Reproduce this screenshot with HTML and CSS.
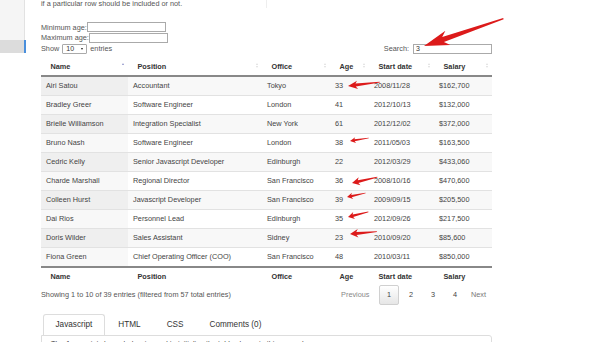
FILE: index.html
```html
<!DOCTYPE html>
<html>
<head>
  <meta charset="UTF-8">
  <title>Range filtering</title>
  <meta name="viewport" content="width=device-width, initial-scale=1">
  <link rel="stylesheet" href="styles.css">
</head>
<body>
  <div class="page">
    <!-- left menu -->
    <aside class="sidebar">
      <div class="side-top"></div>
      <div class="side-active"></div>
    </aside>

    <main class="content">
      <p class="intro">if a particular row should be included or not.</p>

      <!-- age range filters -->
      <div class="filters">
        <div class="filter-row">
          <label for="min">Minimum age:</label>
          <input type="text" id="min" class="age-input">
        </div>
        <div class="filter-row">
          <label for="max">Maximum age:</label>
          <input type="text" id="max" class="age-input">
        </div>
      </div>

      <div class="table-top">
        <div class="length">
          Show
          <span class="select-wrap">
            <select class="length-select">
              <option>10</option>
              <option>25</option>
              <option>50</option>
            </select>
          </span>
          entries
        </div>
        <div class="search">
          <label for="search">Search:</label>
          <input type="text" id="search" class="search-input" value="3">
        </div>
      </div>

      <table class="data-table">
        <colgroup>
          <col class="col-name">
          <col class="col-position">
          <col class="col-office">
          <col class="col-age">
          <col class="col-date">
          <col class="col-salary">
        </colgroup>
        <thead>
          <tr>
            <th class="sort sort-asc">Name</th>
            <th class="sort">Position</th>
            <th class="sort">Office</th>
            <th class="sort">Age</th>
            <th class="sort">Start date</th>
            <th class="sort">Salary</th>
          </tr>
        </thead>
        <tbody>
          <tr><td class="sorted">Airi Satou</td><td>Accountant</td><td>Tokyo</td><td>33</td><td>2008/11/28</td><td>$162,700</td></tr>
          <tr><td class="sorted">Bradley Greer</td><td>Software Engineer</td><td>London</td><td>41</td><td>2012/10/13</td><td>$132,000</td></tr>
          <tr><td class="sorted">Brielle Williamson</td><td>Integration Specialist</td><td>New York</td><td>61</td><td>2012/12/02</td><td>$372,000</td></tr>
          <tr><td class="sorted">Bruno Nash</td><td>Software Engineer</td><td>London</td><td>38</td><td>2011/05/03</td><td>$163,500</td></tr>
          <tr><td class="sorted">Cedric Kelly</td><td>Senior Javascript Developer</td><td>Edinburgh</td><td>22</td><td>2012/03/29</td><td>$433,060</td></tr>
          <tr><td class="sorted">Charde Marshall</td><td>Regional Director</td><td>San Francisco</td><td>36</td><td>2008/10/16</td><td>$470,600</td></tr>
          <tr><td class="sorted">Colleen Hurst</td><td>Javascript Developer</td><td>San Francisco</td><td>39</td><td>2009/09/15</td><td>$205,500</td></tr>
          <tr><td class="sorted">Dai Rios</td><td>Personnel Lead</td><td>Edinburgh</td><td>35</td><td>2012/09/26</td><td>$217,500</td></tr>
          <tr><td class="sorted">Doris Wilder</td><td>Sales Assistant</td><td>Sidney</td><td>23</td><td>2010/09/20</td><td>$85,600</td></tr>
          <tr><td class="sorted">Fiona Green</td><td>Chief Operating Officer (COO)</td><td>San Francisco</td><td>48</td><td>2010/03/11</td><td>$850,000</td></tr>
        </tbody>
        <tfoot>
          <tr>
            <th>Name</th>
            <th>Position</th>
            <th>Office</th>
            <th>Age</th>
            <th>Start date</th>
            <th>Salary</th>
          </tr>
        </tfoot>
      </table>

      <div class="table-bottom">
        <div class="info">Showing 1 to 10 of 39 entries (filtered from 57 total entries)</div>
        <div class="paging">
          <a class="page-btn disabled">Previous</a>
          <a class="page-btn current">1</a>
          <a class="page-btn">2</a>
          <a class="page-btn">3</a>
          <a class="page-btn">4</a>
          <a class="page-btn next">Next</a>
        </div>
      </div>

      <!-- code tabs -->
      <ul class="tabs">
        <li class="tab active">Javascript</li>
        <li class="tab">HTML</li>
        <li class="tab">CSS</li>
        <li class="tab">Comments (0)</li>
      </ul>
      <div class="tab-body">
        The Javascript shown below is used to initialise the table shown in this example:
      </div>
    </main>
  </div>

  <!-- annotation arrows drawn over the screenshot -->
  <svg class="arrows" width="600" height="342" viewBox="0 0 600 342">
    <defs>
      <polygon id="arrow" points="0,0 30,-10 24,-3.5 100,-1 100,1 24,3.5 30,10"/>
    </defs>
    <use href="#arrow" transform="translate(424,46) rotate(-19) scale(0.84,0.75)"/>
    <use href="#arrow" transform="translate(348,86) rotate(-7) scale(0.32,0.42)"/>
    <use href="#arrow" transform="translate(350,141) rotate(-9) scale(0.19,0.3)"/>
    <use href="#arrow" transform="translate(352,183) rotate(-13) scale(0.26,0.4)"/>
    <use href="#arrow" transform="translate(347,197) rotate(-12) scale(0.19,0.32)"/>
    <use href="#arrow" transform="translate(348,217) rotate(-14) scale(0.21,0.36)"/>
    <use href="#arrow" transform="translate(350,234) rotate(-5) scale(0.27,0.42)"/>
  </svg>
</body>
</html>
```

FILE: styles.css
```css
body {
  margin: 0;
  position: relative;
  overflow: hidden;
  font-family: "Liberation Sans", Arial, sans-serif;
  font-size: 7.3px;
  color: #333;
  background: #fff;
}

.page {
  display: flex;
  align-items: flex-start;
}

/* left menu */
.sidebar {
  width: 26px;
  flex: none;
  display: flex;
  flex-direction: column;
}
.side-top {
  width: 25px;
  height: 40px;
  box-sizing: border-box;
  background: #f5f5f5;
  border-right: 1px solid #e2e2e2;
}
.side-active {
  width: 26px;
  height: 13px;
  box-sizing: border-box;
  background: #dcdcdc;
  border-right: 2px solid #4a8fdc;
}

.content {
  margin-left: 15px;
  width: 451px;
}

.intro {
  margin: -1px 0 0 0;
  width: 225px;
  height: 9px;
  line-height: 10px;
  color: #555;
  border-right: 1px solid #eee;
}

/* filters */
.filters {
  margin-top: 14px;
}
.filter-row {
  display: flex;
  align-items: center;
  height: 10.5px;
  color: #555;
}
.filter-row label {
  min-width: 46px;
  flex: none;
  white-space: nowrap;
}
.age-input {
  width: 79px;
  height: 10px;
  box-sizing: border-box;
  margin: 0;
  padding: 0 2px;
  border: 1px solid #aaa;
  font-size: 7px;
}

.table-top {
  display: flex;
  justify-content: space-between;
  align-items: center;
  height: 11px;
  margin-top: 0;
  color: #555;
}
.length {
  display: flex;
  align-items: center;
  gap: 3px;
}
.select-wrap {
  position: relative;
  display: inline-block;
}
.select-wrap::after {
  content: "";
  position: absolute;
  right: 4px;
  top: 4px;
  border-left: 1.5px solid transparent;
  border-right: 1.5px solid transparent;
  border-top: 2.5px solid #222;
}
.length-select {
  appearance: none;
  -webkit-appearance: none;
  width: 25px;
  height: 10px;
  margin: 0;
  padding: 0 0 0 3px;
  border: 1px solid #aaa;
  border-radius: 1px;
  background: #fff;
  font-family: inherit;
  font-size: 7px;
  line-height: 8px;
  color: #333;
}
.search {
  display: flex;
  align-items: center;
  gap: 4px;
}
.search-input {
  width: 79px;
  height: 10px;
  box-sizing: border-box;
  margin: 0;
  padding: 0 2px;
  border: 1px solid #aaa;
  font-family: inherit;
  font-size: 7px;
  color: #333;
}

/* table */
.data-table {
  width: 451px;
  margin-top: 3px;
  border-collapse: collapse;
  table-layout: fixed;
}
.col-name { width: 87px; }
.col-position { width: 134px; }
.col-office { width: 68px; }
.col-age { width: 39px; }
.col-date { width: 65px; }
.col-salary { width: 58px; }

.data-table th {
  text-align: left;
  font-weight: bold;
  padding: 5px 9px 4px 9.5px;
  line-height: 9px;
  white-space: nowrap;
}
.data-table thead th {
  border-bottom: 2px solid #888;
}
.data-table tfoot th {
  border-top: 2px solid #888;
  padding-top: 4px;
}
.data-table td {
  padding: 4px 5px;
  line-height: 10px;
  color: #444;
  white-space: nowrap;
  overflow: hidden;
  border-top: 1px solid #e2e2e2;
}
.data-table tbody tr:first-child td {
  border-top: none;
}
.data-table tbody tr:nth-child(odd) {
  background: #f8f8f8;
}
.data-table tbody tr:nth-child(odd) td.sorted {
  background: #efefef;
}
.data-table tbody tr:nth-child(even) td.sorted {
  background: #f8f8f8;
}

/* sort marks */
.sort {
  position: relative;
}
.sort::before,
.sort::after {
  content: "";
  position: absolute;
  right: 4px;
  border-left: 1.5px solid transparent;
  border-right: 1.5px solid transparent;
}
.sort::before {
  top: 6px;
  border-bottom: 2px solid #ddd;
}
.sort::after {
  top: 9px;
  border-top: 2px solid #ddd;
}
.sort-asc::before {
  border-bottom-color: #8a90c8;
}
.sort-asc::after {
  display: none;
}

/* info and paging */
.table-bottom {
  display: flex;
  justify-content: space-between;
  align-items: center;
  height: 19px;
  color: #555;
}
.paging {
  display: flex;
  align-items: center;
}
.page-btn {
  display: inline-block;
  min-width: 5px;
  padding: 0 6.5px;
  height: 18px;
  line-height: 18px;
  margin-left: 2px;
  border: 1px solid transparent;
  border-radius: 2px;
  text-align: center;
  color: #444;
}
.page-btn.current {
  border-color: #d0d0d0;
  background: linear-gradient(#fff, #e6e6e6);
}
.page-btn.disabled {
  color: #888;
}
.page-btn.next {
  color: #777;
  padding: 0 5px 0 3px;
}

/* tabs */
.tabs {
  display: flex;
  list-style: none;
  margin: 10px 0 0 0;
  padding: 0 0 0 2px;
  gap: 1px;
}
.tab {
  padding: 0 11.5px;
  height: 20px;
  line-height: 20px;
  font-size: 8.2px;
  color: #333;
  border: 1px solid transparent;
  border-bottom: none;
  border-radius: 3px 3px 0 0;
}
.tab.active {
  border-color: #ddd;
  background: #fff;
  margin-bottom: -1px;
  position: relative;
}
.tab-body {
  border: 1px solid #ddd;
  border-radius: 0 3px 0 0;
  padding: 3px 9px;
  height: 30px;
  color: #444;
}

/* annotation arrows */
.arrows {
  position: absolute;
  top: 0;
  left: 0;
  pointer-events: none;
  fill: #dc1a1a;
}
```
